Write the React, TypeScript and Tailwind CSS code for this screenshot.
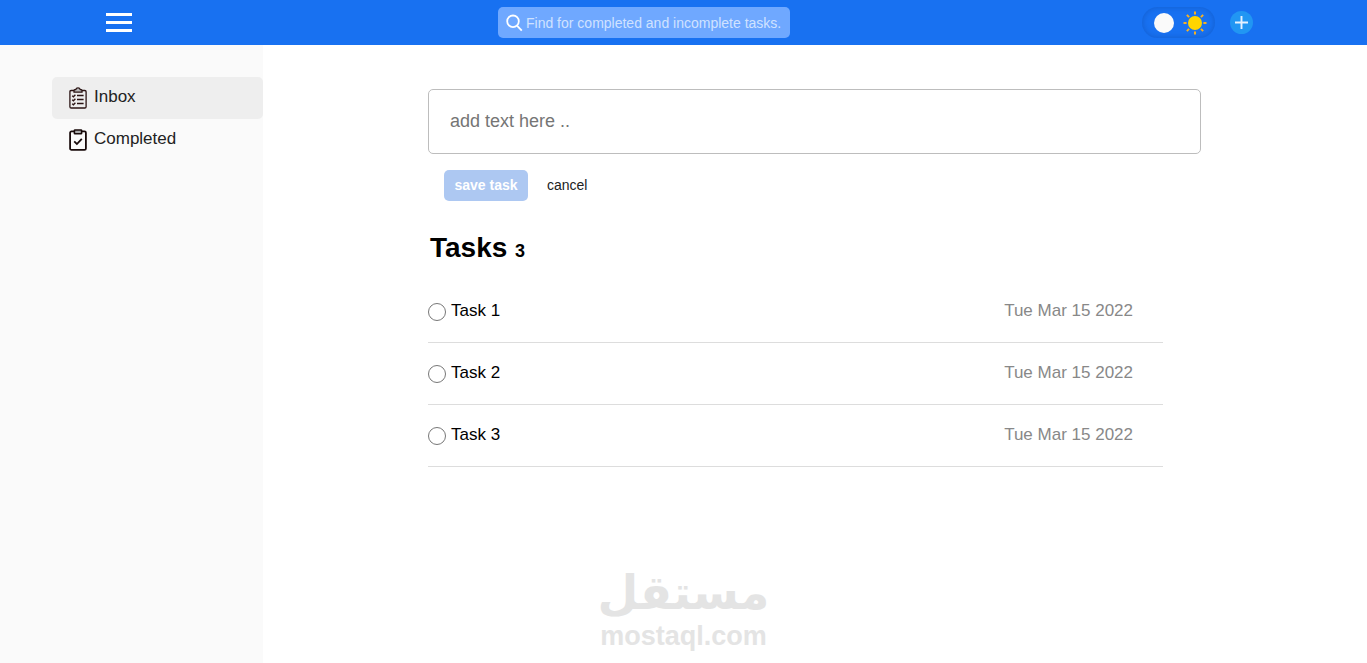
import { useState } from "react";

type Task = {
  id: number;
  title: string;
  date: string;
};

const tasks: Task[] = [
  { id: 1, title: "Task 1", date: "Tue Mar 15 2022" },
  { id: 2, title: "Task 2", date: "Tue Mar 15 2022" },
  { id: 3, title: "Task 3", date: "Tue Mar 15 2022" },
];

function SearchIcon() {
  return (
    <svg width="17" height="18" viewBox="0 0 17 18" fill="none" stroke="#fff" strokeWidth="1.8" className="shrink-0">
      <circle cx="7" cy="7.3" r="5.8" />
      <path d="M11.2 11.8 15.8 16.6" />
    </svg>
  );
}

function SunIcon() {
  const rays = [0, 45, 90, 135, 180, 225, 270, 315];
  return (
    <svg width="24" height="24" viewBox="0 0 24 24">
      <circle cx="12" cy="12" r="7" fill="#ffd500" />
      {rays.map((r) => (
        <path key={r} d="M12 0.5V3.6" stroke="#ffb31a" strokeWidth="1.9" transform={`rotate(${r} 12 12)`} />
      ))}
    </svg>
  );
}

function InboxIcon() {
  return (
    <svg width="18" height="22" viewBox="0 0 18 22" fill="none" stroke="#2b1414" strokeWidth="1.3">
      <path d="M5 3.5H2.2Q.9 3.5 .9 4.8V19.7Q.9 21 2.2 21H15.8Q17.1 21 17.1 19.7V4.8Q17.1 3.5 15.8 3.5H13" />
      <path d="M5 5.2V3.4Q5 2.6 6.8 2.5Q7.2.8 9 .8T11.2 2.5Q13 2.6 13 3.4V5.2Z" fill="#bbb" />
      <path d="M3.2 8.8 4.4 9.8 6.4 7.7M3.2 12.8 4.4 13.8 6.4 11.7M3.2 16.8 4.4 17.8 6.4 15.7" strokeWidth="1.3" />
      <path d="M8 8.5H14.6M8 12.5H14.6M8 16.5H14.6" strokeWidth="1.4" />
    </svg>
  );
}

function CompletedIcon() {
  return (
    <svg width="18" height="22" viewBox="0 0 18 22" fill="none" stroke="#180a0a" strokeWidth="1.8">
      <rect x="1.1" y="2.4" width="15.8" height="18.4" rx="1.4" />
      <rect x="5.4" y="1" width="7.2" height="3.8" rx=".6" fill="#aaa" strokeWidth="1.6" />
      <path d="M5.2 12.4 7.9 15 12.8 9.9" />
    </svg>
  );
}

function Navbar() {
  const [dark, setDark] = useState(false);

  return (
    <header className="flex h-[45px] items-center justify-between bg-[#1871f1] pl-[106px] pr-[114px]">
      <button type="button" aria-label="Menu" className="flex w-10 flex-col gap-[5px]">
        <span className="h-[3px] w-[26px] bg-white" />
        <span className="h-[3px] w-[26px] bg-white" />
        <span className="h-[3px] w-[26px] bg-white" />
      </button>

      <label className="flex h-[31px] w-[292px] items-center gap-[3px] rounded-[5px] bg-[#6fa8ff] pl-2 pr-2">
        <SearchIcon />
        <input
          type="text"
          aria-label="Search tasks"
          placeholder="Find for completed and incomplete tasks."
          className="min-w-0 flex-1 bg-transparent text-sm text-white outline-none placeholder:text-[#cfe2ff]"
        />
      </label>

      <div className="flex items-center gap-[15px]">
        <button
          type="button"
          role="switch"
          aria-checked={dark}
          aria-label="Dark mode"
          onClick={() => setDark(!dark)}
          className="flex h-[31px] w-[73px] items-center justify-between rounded-full pl-3 pr-2 shadow-[inset_0_0_5px_1px_rgba(15,75,170,0.4)]"
        >
          <span className="size-5 rounded-full bg-[#fafafa]" />
          <SunIcon />
        </button>
        <button type="button" aria-label="Add task" className="flex size-[23px] items-center justify-center rounded-full bg-[#2196f3]">
          <svg width="13" height="13" viewBox="0 0 13 13" stroke="#e4f1ff" strokeWidth="1.9">
            <path d="M6.5 0V13M0 6.5H13" />
          </svg>
        </button>
      </div>
    </header>
  );
}

function Sidebar() {
  return (
    <nav className="w-[263px] shrink-0 bg-[#fafafa] pl-[52px] pt-8 text-[17px] text-[#222]">
      <a href="#inbox" className="flex h-[42px] items-center gap-[7px] rounded-[5px] bg-[#eee] pl-[17px]">
        <InboxIcon />
        <span className="pb-0.5">Inbox</span>
      </a>
      <a href="#completed" className="flex h-[42px] items-center gap-[7px] rounded-[5px] pl-[17px]">
        <CompletedIcon />
        <span className="pb-0.5">Completed</span>
      </a>
    </nav>
  );
}

function TaskForm() {
  return (
    <form onSubmit={(e) => e.preventDefault()}>
      <input
        type="text"
        aria-label="Task text"
        placeholder="add text here .."
        className="h-[65px] w-full rounded-[5px] border border-[#bdbdbd] px-[21px] text-lg outline-none placeholder:text-[#757575]"
      />
      <div className="mt-4 flex items-center gap-[19px] pl-4">
        <button type="submit" className="h-[31px] w-[84px] rounded-[5px] bg-[#adc8f2] pb-0.5 text-sm font-bold text-white">
          save task
        </button>
        <button type="button" className="pb-0.5 text-sm text-[#222]">
          cancel
        </button>
      </div>
    </form>
  );
}

function TaskItem({ task }: { task: Task }) {
  return (
    <li className="flex h-[62px] items-center border-b border-[#ddd]">
      <input
        id={`task-${task.id}`}
        type="checkbox"
        className="mr-[5px] size-[18px] appearance-none rounded-full border border-[#777] checked:bg-[#777]"
      />
      <label htmlFor={`task-${task.id}`} className="flex-1 pb-0.5 text-[17px]">
        {task.title}
      </label>
      <time dateTime="2022-03-15" className="pb-0.5 pr-[30px] text-[17px] text-[#888]">
        {task.date}
      </time>
    </li>
  );
}

export default function App() {
  return (
    <div className="relative flex min-h-screen flex-col bg-white font-['Liberation_Sans',Arial,sans-serif] text-black">
      <Navbar />
      <div className="flex flex-1">
        <Sidebar />
        <main className="min-w-0 flex-1 pl-[165px] pr-[166px] pt-11">
          <TaskForm />
          <h1 className="ml-0.5 mt-7 text-[28px] font-bold leading-[38px]">
            Tasks <span className="text-lg">{tasks.length}</span>
          </h1>
          <ul className="mr-[38px] mt-[14px]">
            {tasks.map((task) => (
              <TaskItem key={task.id} task={task} />
            ))}
          </ul>
        </main>
      </div>

      <div className="pointer-events-none absolute inset-x-0 bottom-3 flex flex-col items-center font-bold text-[#e4e4e4]">
        <span lang="ar" dir="rtl" className="font-['DejaVu_Sans',sans-serif] text-[47px] leading-[56px]">
          مستقل
        </span>
        <span className="text-[27px] leading-[30px]">mostaql.com</span>
      </div>
    </div>
  );
}
